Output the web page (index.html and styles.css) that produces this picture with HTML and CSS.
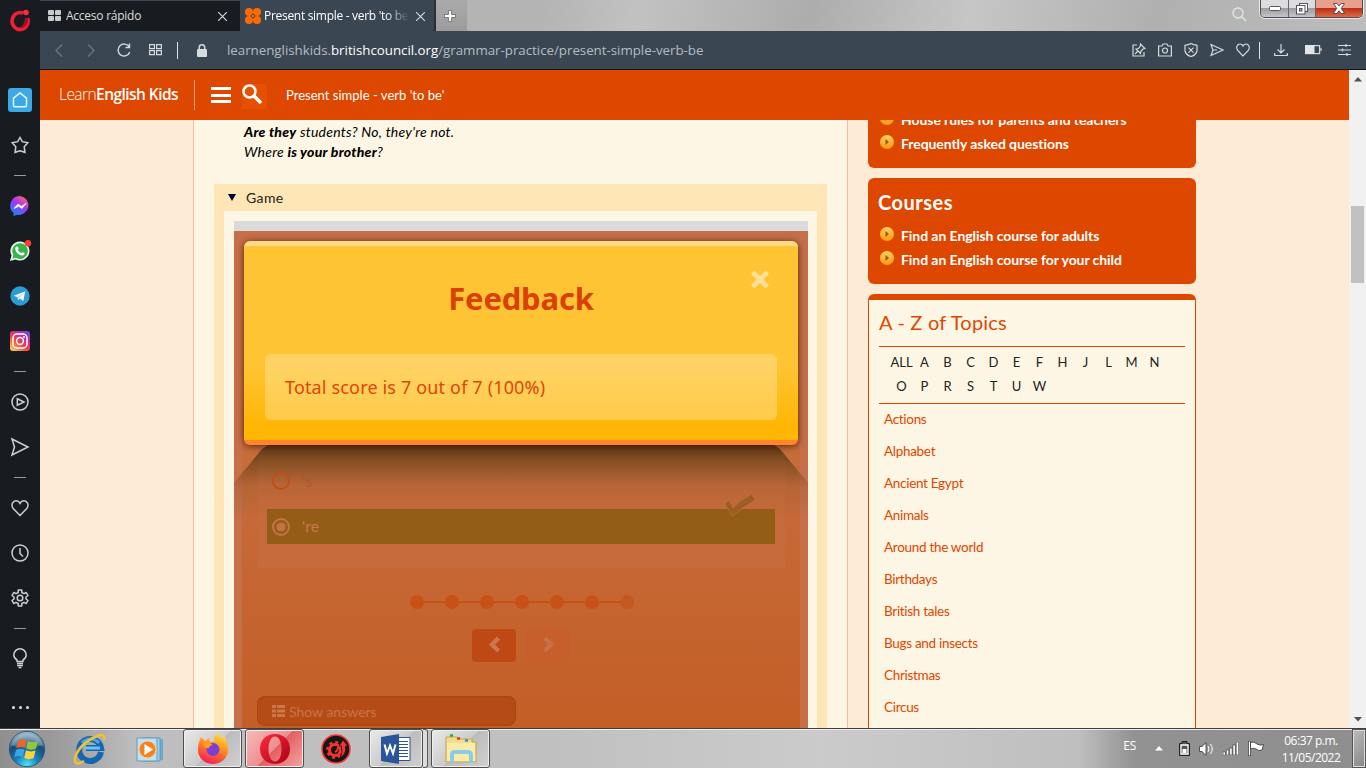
FILE: index.html
```html
<!DOCTYPE html>
<html lang="en">
<head>
<meta charset="utf-8">
<title>Present simple - verb 'to be'</title>
<link rel="stylesheet" href="styles.css">
</head>
<body>
<svg width="0" height="0" class="defs">
  <defs>
    <linearGradient id="ms" x1="0.8" y1="0" x2="0.2" y2="1"><stop offset="0" stop-color="#ff6968"/><stop offset=".45" stop-color="#a334fa"/><stop offset="1" stop-color="#0a8bff"/></linearGradient>
    <linearGradient id="ig" x1="0.1" y1="1" x2="0.9" y2="0"><stop offset="0" stop-color="#ffd15c"/><stop offset=".4" stop-color="#f5483c"/><stop offset=".7" stop-color="#c32aa3"/><stop offset="1" stop-color="#5b4fe0"/></linearGradient>
    <linearGradient id="op" x1="0" y1="0" x2="1" y2="1"><stop offset="0" stop-color="#ff2b3c"/><stop offset="1" stop-color="#a70014"/></linearGradient>
    <radialGradient id="orb" cx=".5" cy=".95" r=".9"><stop offset="0" stop-color="#4fe3ff"/><stop offset=".35" stop-color="#1585bd"/><stop offset=".7" stop-color="#174a72"/><stop offset="1" stop-color="#8fb4cc"/></radialGradient>
    <linearGradient id="ff" x1=".7" y1="0" x2=".3" y2="1"><stop offset="0" stop-color="#ffe03a"/><stop offset=".45" stop-color="#ff8a1e"/><stop offset="1" stop-color="#f5165c"/></linearGradient>
    <linearGradient id="bul" x1="0" y1="0" x2="0" y2="1"><stop offset="0" stop-color="#ffcf63"/><stop offset="1" stop-color="#ff9a10"/></linearGradient>
    <symbol id="bullet" viewBox="0 0 14 14"><circle cx="7" cy="7" r="7" fill="url(#bul)"/><path d="M5.5 4 9 7 5.5 10Z" fill="#a4501a"/></symbol>
  </defs>
</svg>
<div class="screen">
  <div class="browser">
    <nav class="rail">
      <div class="logo"><svg width="22" height="22" viewBox="0 0 22 22"><path d="M14 4.2A8 8.5 0 1 0 18.5 9" fill="none" stroke="#f01f35" stroke-width="3.6"/><path d="M19 9A8 8.5 0 0 1 8 18.5Q15 19 16 9Z" fill="#a3101e"/><circle cx="17" cy="3.5" r="2.8" fill="#ff2940"/></svg></div>
      <div class="it"><span class="home"><svg width="24" height="24" viewBox="0 0 24 24" fill="none" stroke="#e8f6ff" stroke-width="1.5"><path d="M5.5 10.2 12 4.8 18.500 10.2V17.500Q18.500 18.800 17.200 18.800H6.800Q5.500 18.800 5.500 17.500Z" stroke-linejoin="round"/></svg></span></div>
      <div class="it"><svg width="18" height="18" viewBox="0 0 18 18"><path d="M9 1.500 11.300 5.700 16.800 6.800 13.200 10.700 13.900 16.300 9 14.700 4.100 16.300 4.800 10.700 1.200 6.800 6.700 5.700Z"/></svg></div>
      <hr>
      <div class="it"><svg width="20" height="20" viewBox="0 0 20 20" class="solid"><path d="M10 0A10 9.500 0 1 1 7 18.800L3.500 20V16.800A9.600 9.600 0 0 1 10 0Z" fill="url(#ms)"/><path d="M4 12.500 8 8 11.300 10.400 16 7.500 12 12.500 8.800 10.200Z" fill="#fff" stroke="#fff" stroke-width=".8"/></svg></div>
      <div class="it"><svg width="22" height="22" viewBox="0 0 22 22" class="solid"><path d="M11 1.500A9.500 9.500 0 1 1 6.500 19.400L1 21 2.500 15.500A9.500 9.500 0 0 1 11 1.500Z" fill="#eef3ee"/><path d="M11 3.300A7.800 7.800 0 1 1 6.900 17.700L3.500 18.700 4.300 15A7.800 7.800 0 0 1 11 3.300Z" fill="#38b54a"/><path d="M7.500 6.500 9 6.700 9.700 8.800 8.800 10Q10 12.400 12.500 13.300L13.700 12.100 15.700 13.200Q15.500 15.500 13 15.600 6.800 14.500 6.200 8.500Q6.500 7 7.500 6.500Z" fill="#fff"/><circle cx="19" cy="3.200" r="3.200" fill="#ff3b35"/></svg></div>
      <div class="it"><svg width="20" height="20" viewBox="0 0 20 20" class="solid"><circle cx="10" cy="10" r="9.700" fill="#2a9bd3"/><path d="M3.700 9.800 15.300 5.200 13.300 15 9.600 12.600 8 14.200 7.700 11.400Z" fill="#f1f7fb"/><path d="M7.700 11.400 13 7.200 9 12" fill="#a9cde2"/></svg></div>
      <div class="it"><svg width="20" height="20" viewBox="0 0 20 20" class="solid"><rect width="20" height="20" rx="3" fill="url(#ig)"/><g fill="none" stroke="#fff" stroke-width="1.500"><rect x="3" y="3" width="14" height="14" rx="4"/><circle cx="10" cy="10" r="3.400"/></g><circle cx="14" cy="6" r="1" fill="#fff"/></svg></div>
      <hr>
      <div class="it"><svg width="18" height="18" viewBox="0 0 18 18"><circle cx="9" cy="9" r="8"/><path d="M6.300 5.800 13 9 6.300 12.200Z"/></svg></div>
      <div class="it"><svg width="18" height="18" viewBox="0 0 18 18"><path d="M1 1 17 9 1 17 3.500 9Z"/></svg></div>
      <hr>
      <div class="it"><svg width="18" height="18" viewBox="0 0 18 18"><path d="M9 16.500 2.200 9.500C-.5 5.500 2 1.800 5.200 1.800 7.500 1.800 8.500 3.300 9 4.300 9.500 3.300 10.500 1.800 12.800 1.800 16 1.800 18.500 5.500 15.800 9.500Z"/></svg></div>
      <div class="it"><svg width="18" height="18" viewBox="0 0 18 18"><circle cx="9" cy="9" r="8"/><path d="M9 4V9.500L12 12.500"/></svg></div>
      <div class="it"><svg width="18" height="18" viewBox="0 0 18 18"><path d="M7.200 1H10.800V3.500L13 4.700 15.300 3.500 17 6.500 15 8V10L17 11.500 15.300 14.500 13 13.300 10.800 14.500V17H7.200V14.500L5 13.300 2.700 14.500 1 11.500 3 10V8L1 6.500 2.700 3.500 5 4.700 7.200 3.500Z" stroke-linejoin="round"/><circle cx="9" cy="9" r="2.800"/></svg></div>
      <hr>
      <div class="it"><svg width="16" height="21" viewBox="0 0 16 21"><path d="M5 13.500V12Q1.800 10 1.800 7A6.200 6.200 0 0 1 14.200 7Q14.200 10 11 12V13.500ZM5 15.500H11M5 17.500H11M6.500 19.500H9.500"/></svg></div>
      <div class="it more"><i></i><i></i><i></i></div>
    </nav>
    <div class="main">
      <div class="tabs">
        <div class="tab"><svg width="13" height="12" viewBox="0 0 13 12" fill="#c8cbce"><rect width="6" height="5" rx="1"/><rect x="7" width="6" height="5" rx="1"/><rect y="6" width="6" height="5" rx="1"/><rect x="7" y="6" width="6" height="5" rx="1"/></svg><span class="tt">Acceso rápido</span><svg class="x" width="9" height="9" viewBox="0 0 9 9"><path d="M0 0 9 9M9 0 0 9"/></svg></div>
        <div class="tab on"><svg width="16" height="16" viewBox="0 0 16 16"><g fill="#ff6a00"><circle cx="4" cy="4" r="4"/><circle cx="12" cy="4" r="4"/><circle cx="4" cy="12" r="4"/><circle cx="12" cy="12" r="4"/><path d="M4 4H12V12H4Z"/></g><path d="M8 5.300 10.700 8 8 10.700 5.300 8Z" fill="#3a4651"/><circle cx="8" cy="8" r="1.300" fill="#ff6a00"/></svg><span class="tt">Present simple - verb 'to be'</span><svg class="x" width="9" height="9" viewBox="0 0 9 9"><path d="M0 0 9 9M9 0 0 9"/></svg></div>
        <div class="plus"><svg width="12" height="12" viewBox="0 0 12 12"><path d="M4.500.5H7.500V4.500H11.500V7.500H7.500V11.500H4.500V7.500H.5V4.500H4.500Z" fill="#fff" stroke="#666" stroke-width=".8"/></svg></div>
        <svg class="find" width="15" height="15" viewBox="0 0 15 15" fill="none" stroke="#e6e8e8" stroke-width="1.300"><circle cx="6" cy="6" r="5"/><path d="M9.700 9.700 14 14"/></svg>
        <div class="wbs">
          <b class="w1"><svg width="12" height="5"><rect x=".5" y=".5" width="11" height="4" rx="1" fill="#fff" stroke="#565661"/></svg></b>
          <b class="w2"><svg width="12" height="12" viewBox="0 0 12 12" stroke="#565661"><rect x="3.500" y=".5" width="8" height="8" fill="#fff"/><rect x=".5" y="2.500" width="8.500" height="8.500" fill="#fff"/><rect x="3.500" y="5.500" width="2.500" height="2.500" fill="#aaa"/></svg></b>
          <b class="w3"><svg width="12" height="11" viewBox="0 0 12 11"><path d="M.5.500H4L6 3 8 .5H11.500L8.300 5.300 11.500 10.500H8L6 7.800 4 10.500H.5L3.700 5.300Z" fill="#fff" stroke="#54404d" stroke-width=".9"/></svg></b>
        </div>
      </div>
      <div class="bar">
        <svg class="dim" width="8" height="13" viewBox="0 0 8 13"><path d="M7 .5 1 6.500 7 12.500"/></svg>
        <svg class="dim" width="8" height="13" viewBox="0 0 8 13"><path d="M1 .5 7 6.500 1 12.500"/></svg>
        <svg width="14" height="14" viewBox="0 0 14 14"><path d="M12.300 4A6 6 0 1 0 12.800 9M12.500.5V4.500H8.500" stroke-width="1.400"/></svg>
        <svg width="13" height="12" viewBox="0 0 13 12"><path d="M.6.600H5.400V4.600H.6ZM7.600.600H12.400V4.600H7.600ZM.6 6.600H5.400V10.600H.6ZM7.600 6.600H12.400V10.600H7.600Z"/></svg>
        <em></em>
        <svg class="lock" width="10" height="13" viewBox="0 0 10 13"><rect y="5" width="10" height="8" rx="1" fill="#d9dcdf" stroke="none"/><path d="M2.300 6V3.500A2.700 2.700 0 0 1 7.700 3.500V6" stroke-width="1.500"/></svg>
        <span class="url">learnenglishkids.<strong>britishcouncil.org</strong>/grammar-practice/present-simple-verb-be</span>
        <div class="acts">
          <svg width="14" height="14" viewBox="0 0 14 14"><path d="M5 2H1V13H12V9M8.500 1 13 5.500 11 6 9 8 8.500 10.500 4 6 6.500 5.500 8.300 3.300ZM6 8 3 11"/></svg>
          <svg width="14" height="14" viewBox="0 0 14 14"><path d="M.6 3H4L5 1H9L10 3H13.400V13H.6Z"/><circle cx="7" cy="7.500" r="2.500"/></svg>
          <svg width="14" height="14" viewBox="0 0 14 14"><path d="M1 2.300Q4.500 2 7 .6 9.500 2 13 2.300V8Q12 12 7 13.500 2 12 1 8ZM4.500 4.700 9.500 9.700M9.500 4.700 4.500 9.700"/></svg>
          <svg width="14" height="14" viewBox="0 0 14 14"><path d="M1 1.500 13 7 1 12.500 3 7ZM3 7H7"/></svg>
          <svg width="14" height="14" viewBox="0 0 14 14"><path d="M7 13 1.700 7.500C-.5 4 1.500 1 4 1 6 1 6.600 2.200 7 3 7.400 2.200 8 1 10 1 12.500 1 14.500 4 12.300 7.500Z"/></svg>
          <em></em>
          <svg width="14" height="14" viewBox="0 0 14 14"><path d="M7 1V9.500M3.500 6.500 7 10 10.500 6.500M.7 10V12.500H13.300V10"/></svg>
          <svg class="batt" width="17" height="10" viewBox="0 0 17 10"><rect x=".6" y=".6" width="14" height="8"/><rect y="0" width="9.500" height="9" fill="#e2e5e8" stroke="none"/><path d="M16 3V6"/></svg>
          <svg width="13" height="12" viewBox="0 0 13 12"><path d="M0 1.500H13M0 6H13M0 10.500H13M8 0V3M4.500 4.500V7.500M9 9V12"/></svg>
        </div>
      </div>
      <div class="view">
        <div class="site">
          <header>
            <div class="brand">Learn<strong>English Kids</strong></div>
            <div class="burger"><i></i><i></i><i></i></div>
            <div class="mag"><svg width="20" height="20" viewBox="0 0 20 20" fill="none" stroke="#fff"><circle cx="7.500" cy="7.500" r="6" stroke-width="2.500"/><path d="M12 12 19 19" stroke-width="3.500"/></svg></div>
            <div class="crumb">Present simple - verb 'to be'</div>
          </header>
          <div class="cols">
            <article>
              <div class="examples">
                <p><strong>Are they</strong> students? No, they're not.</p>
                <p>Where <strong>is your brother</strong>?</p>
              </div>
              <section class="gamebox">
                <div class="gt"><svg width="8" height="7"><path d="M0 0H8L4 7Z" fill="#00003c"/></svg><span>Game</span></div>
                <div class="inner">
                  <div class="grey"></div>
                  <div class="stage">
                    <div class="sheet"></div>
                    <div class="fold"></div>
                    <div class="card">
                      <svg class="close" width="20" height="19" viewBox="0 0 20 19"><path d="M3.500 3 16.500 16M16.500 3 3.500 16" stroke="#ffe094" stroke-width="5.500" stroke-linecap="square"/></svg>
                      <h2>Feedback</h2>
                      <div class="score">Total score is 7 out of 7 (100%)</div>
                    </div>
                    <div class="quiz">
                      <div class="opt"><svg width="18" height="18"><circle cx="9" cy="9" r="8" fill="none" stroke="#bd5019" stroke-width="2"/></svg><span>'s</span></div>
                      <div class="opt sel"><svg width="18" height="18"><circle cx="9" cy="9" r="8" fill="none" stroke="#c47246" stroke-width="2"/><circle cx="9" cy="9" r="4.600" fill="#c47246"/></svg><span>'re</span>
                        <svg class="tick" width="32" height="26" viewBox="0 0 32 26"><path d="M1 11 5 7 9 15Q16 7 28 1L31 7Q18 15 8.500 23Z" fill="#9c5d26" stroke="#c4703c" stroke-opacity=".7"/></svg></div>
                    </div>
                    <div class="dots"><i></i><i></i><i></i><i></i><i></i><i></i><i></i></div>
                    <div class="btns"><b><svg width="13" height="17" viewBox="0 0 13 17"><path d="M10.500 2 4 8.500 10.500 15" fill="none" stroke="#c77850" stroke-width="4.500"/></svg></b><b class="off"><svg width="13" height="17" viewBox="0 0 13 17"><path d="M2.500 2 9 8.500 2.500 15" fill="none" stroke="#c7704a" stroke-width="4.500"/></svg></b></div>
                    <div class="show"><svg width="13" height="12" fill="#cb764b"><path d="M0 0H4V3H0ZM5 0H13V3H5ZM0 4.500H4V7.500H0ZM5 4.500H13V7.500H5ZM0 9H4V12H0ZM5 9H13V12H5Z"/></svg><span>Show answers</span></div>
                  </div>
                </div>
              </section>
            </article>
            <aside>
              <div class="red top">
                <p><svg><use href="#bullet"/></svg><span>House rules for parents and teachers</span></p>
                <p><svg><use href="#bullet"/></svg><span>Frequently asked questions</span></p>
              </div>
              <div class="red courses">
                <h3>Courses</h3>
                <p><svg><use href="#bullet"/></svg><span>Find an English course for adults</span></p>
                <p><svg><use href="#bullet"/></svg><span>Find an English course for your child</span></p>
              </div>
              <div class="topics">
                <h3>A - Z of Topics</h3>
                <div class="az"><span>ALL</span><span>A</span><span>B</span><span>C</span><span>D</span><span>E</span><span>F</span><span>H</span><span>J</span><span>L</span><span>M</span><span>N</span><span>O</span><span>P</span><span>R</span><span>S</span><span>T</span><span>U</span><span>W</span></div>
                <ul><li>Actions</li><li>Alphabet</li><li>Ancient Egypt</li><li>Animals</li><li>Around the world</li><li>Birthdays</li><li>British tales</li><li>Bugs and insects</li><li>Christmas</li><li>Circus</li></ul>
              </div>
            </aside>
          </div>
        </div>
        <div class="scroll"><svg width="8" height="5"><path d="M0 4.500 4 0 8 4.500Z" fill="#505050"/></svg><div class="thumb"></div><svg width="8" height="5"><path d="M0 0 4 4.500 8 0Z" fill="#505050"/></svg></div>
      </div>
    </div>
  </div>
  <footer class="task">
    <div class="slot start"><svg width="38" height="38" viewBox="0 0 38 38"><circle cx="19" cy="19" r="17.700" fill="url(#orb)" stroke="#355a74"/><path d="M3 15A17 17 0 0 1 35 15Q19 20 3 15Z" fill="#fff" opacity=".25"/><path d="M10 11Q14 8 18.500 10.500L16.800 18Q13 16 8.300 18.300Z" fill="#f0622b"/><path d="M20 11Q25 13.500 30 11L28 18.500Q23.500 21 18.300 18.500Z" fill="#92c83e"/><path d="M8 20Q12.500 17.500 16.500 19.700L14.800 27Q11 25 6.300 27Z" fill="#3da2e6"/><path d="M18 20.300Q23 22.500 27.600 20.300L25.700 28Q21 30.300 16.200 28Z" fill="#ffd23b"/></svg></div>
    <div class="slot"><svg width="34" height="34" viewBox="0 0 34 34"><path d="M28 20A11 11 0 1 1 28 16H13" fill="none" stroke="#1667b3" stroke-width="6"/><path d="M27 16H12" stroke="#69c5f3" stroke-width="3"/><path d="M9 11A11 11 0 0 1 26 11" fill="none" stroke="#43a8e6" stroke-width="3"/><path d="M31 8Q33 1 24 4 6 12 2 26 1 35 11 29" fill="none" stroke="#f5c02d" stroke-width="2.500"/></svg></div>
    <div class="slot"><svg width="30" height="28" viewBox="0 0 30 28"><path d="M10 4H27V25H10Z" fill="#6fa9c9"/><path d="M6 3H24V26H6Z" fill="#9fd0e8" stroke="#5b9dbf"/><path d="M1 3H21V26H1Z" fill="#bfe1f0" stroke="#5b9dbf"/><circle cx="11.500" cy="14.500" r="8.500" fill="#f58220" stroke="#fbd2a5"/><path d="M8.500 9 17 14.500 8.500 20Z" fill="#fff"/></svg></div>
    <div class="app"><svg width="32" height="32" viewBox="0 0 32 32"><path d="M2 9 4 4 8 8 12 5 13 9 18 8 17 4 21 0 24 5 28 4Q31 10 31 17A15 14 0 0 1 1 17Q1 12 2 9Z" fill="url(#ff)"/><ellipse cx="16" cy="16.500" rx="6.500" ry="6.500" fill="#7a3fd4"/><path d="M6 11Q10 8 16 12 12 13 12 15 8 16 6 11Z" fill="#ff9b26"/></svg></div>
    <div class="app opera"><svg width="32" height="32" viewBox="0 0 32 32"><path fill-rule="evenodd" d="M16 1C25 1 31 7.500 31 16S25 31 16 31 1 24.500 1 16 7 1 16 1ZM16 3.500C12 3.500 9.500 9 9.500 16S12 28.500 16 28.500 22.500 23 22.500 16 20 3.500 16 3.500Z" fill="url(#op)"/></svg></div>
    <div class="slot disc"><svg width="30" height="30" viewBox="0 0 30 30"><circle cx="15" cy="15" r="14" fill="#171717" stroke="#f33" stroke-width="1.500"/><circle cx="14" cy="16" r="5.500" fill="none" stroke="#f4352f" stroke-width="3"/><circle cx="14" cy="16" r="7.700" fill="none" stroke="#f4352f" stroke-width="2.500" stroke-dasharray="3 3.050"/><path d="M14 18Q17 17 17 13" stroke="#f4352f" stroke-width="2" fill="none"/><path d="M22 6 27 12H24.500Q26 20 19 24 22 19 20.500 12H18Z" fill="#f4352f" stroke="#171717" stroke-width=".8"/></svg></div>
    <div class="app word"><svg width="30" height="30" viewBox="0 0 30 30"><path d="M15 3.500H29V26.500H15Z" fill="#fff" stroke="#2a5699"/><path d="M18 7.500H27M18 10.500H27M18 13.500H27M18 16.500H27M18 19.500H27M18 22.500H27" stroke="#2a5699"/><path d="M0 3 18 0V30L0 27Z" fill="#2a5699"/><path d="M3.500 10.500 6 19.500 9 11.500 12 19.500 14.500 10.500" fill="none" stroke="#fff" stroke-width="2"/></svg></div><div class="stack"></div>
    <div class="app expl"><svg width="34" height="30" viewBox="0 0 34 30"><path d="M2 3H13L15 5H28V8H32V28H2Z" fill="#f1dd8b" stroke="#c5a64a"/><path d="M6 1.500H9" stroke="#1fae3a" stroke-width="2.500"/><path d="M13 4.500H16" stroke="#d33b25" stroke-width="2.500"/><path d="M21 6.500H24" stroke="#368bd0" stroke-width="2.500"/><path d="M3 9H31V27H3Z" fill="#f9ecab"/><path d="M8 29V21Q8 18 11 18H24Q27 18 27 21V29" fill="none" stroke="#8bcbe5" stroke-width="4"/></svg></div>
    <div class="tray">
      <span class="es">ES</span>
      <svg class="tri" width="8" height="5"><path d="M0 4.500 4 0 8 4.500Z" fill="#fff"/></svg>
      <svg width="11" height="15" viewBox="0 0 11 15"><path d="M3 .5H8V2.500H10.500V14.500H.5V2.500H3Z" fill="#555" stroke="#222"/><path d="M2 4H9V13H2Z" fill="none" stroke="#fff" stroke-width="1.300"/><path d="M3.500 8H7.500V12H3.500Z" fill="#fff"/></svg>
      <svg width="15" height="14" viewBox="0 0 15 14"><path d="M.5 4.500H3L7 .7V13.300L3 9.500H.5Z" fill="#fff" stroke="#333" stroke-width=".8"/><path d="M9 4Q11 7 9 10M11.500 2Q15 7 11.500 12" fill="none" stroke="#fff"/></svg>
      <svg width="16" height="13" viewBox="0 0 16 13" fill="#fff" stroke="#333" stroke-width=".6"><path d="M0 10H2.500V13H0ZM3.300 8H5.800V13H3.300ZM6.600 6H9.100V13H6.600ZM9.900 3H12.400V13H9.900ZM13.200 0H15.700V13H13.200Z"/></svg>
      <svg width="16" height="15" viewBox="0 0 16 15"><path d="M1.500 0V15" stroke="#333" stroke-width="3"/><path d="M1.500.5V14.500" stroke="#fff" stroke-width="1.500"/><path d="M2.500 1.500Q6 0 9 3 12 5 15.500 3.500L14 9Q11 10.500 8 8 5 6.500 2.500 8Z" fill="#fff" stroke="#333" stroke-width=".8"/></svg>
      <div class="clock"><div>06:37 p.m.</div><div>11/05/2022</div></div>
      <div class="desk"></div>
    </div>
  </footer>
</div>
</body>
</html>
```
FILE: styles.css
```css
* { box-sizing: border-box; margin: 0; padding: 0; }
body { width: 1366px; height: 768px; overflow: hidden; font-family: "Open Sans", sans-serif; }
.defs { position: absolute; }
.screen { width: 1366px; height: 768px; display: flex; flex-direction: column; }
.browser { height: 728px; display: flex; }

.rail { width: 40px; flex: none; background: #181c20; }
.rail svg { fill: none; stroke: #c9d0d4; stroke-width: 1.5; overflow: visible; }
.rail svg.solid { stroke: none; }
.logo { height: 77px; padding: 9px 0 0 9px; }
.rail .logo svg { stroke: none; }
.it { height: 45px; display: flex; align-items: center; justify-content: center; }
.home { width: 24px; height: 24px; background: #3ba9e4; border-radius: 3px; display: flex; }
.rail .home svg { stroke: #e8f6ff; }
.rail hr { border: 0; height: 1px; width: 12px; margin: 8px 14px 7px; background: #8b9da6; }
.more { height: 53px; gap: 4px; }
.more i { width: 3px; height: 3px; border-radius: 50%; background: #e2e5e7; }

.main { flex: 1; display: flex; flex-direction: column; min-width: 0; }
.tabs { height: 31px; display: flex; background: linear-gradient(100deg, #b4b4b4 0 38%, #c2c2c2 45%, #adadad 58%, #c6c6c6 70%, #b0b0b0 84%, #bdbdbd 100%); }
.tab { width: 200px; background: #181c20; border-top: 1px solid #3b4754; padding: 0 13px 0 8px; display: flex; align-items: center; font-size: 12px; color: #d8dcdf; }
.tab .tt { flex: 1; margin-left: 5px; white-space: nowrap; overflow: hidden; letter-spacing: -.25px; line-height: 18px; }
.tab .x { margin-left: 7px; fill: none; stroke: #d8dcdf; stroke-width: 1.1; }
.tab.on { width: 194px; background: #3a4651; padding: 0 9px 0 5px; color: #fff; }
.tab.on .tt { margin-left: 3px; letter-spacing: -.3px; -webkit-mask-image: linear-gradient(90deg, #000 84%, transparent); mask-image: linear-gradient(90deg, #000 84%, transparent); }
.plus { width: 33px; padding-right: 3px; border-left: 2px solid #2b3035; background: linear-gradient(#aaa, #9c9c9c); display: flex; align-items: center; justify-content: center; }
.find { margin: 7px 13px 0 auto; }
.wbs { width: 103px; height: 18px; margin-right: 3px; display: flex; border: 1px solid #4d4d52; border-top: 0; border-radius: 0 0 5px 5px; overflow: hidden; box-shadow: 0 0 0 1px #e7e7e7; }
.wbs b { display: flex; align-items: center; justify-content: center; background: linear-gradient(#dcdcdc 45%, #9d9d9f 50%, #c5c5c7); border-right: 1px solid #65656a; }
.w1 { width: 28px; }
.w2 { width: 27px; }
.wbs .w3 { flex: 1; border: 0; background: linear-gradient(#e6a08d 45%, #bd2f12 50%, #dc6a48); }

.bar { height: 39px; background: #3a4651; border-bottom: 1px solid #12161a; display: flex; align-items: center; padding: 0 15px 0 15px; }
.bar svg { fill: none; stroke: #d5dadd; stroke-width: 1.2; flex: none; }
.bar .dim { stroke: #6d7983; margin-right: 24px; }
.bar .dim + .dim { margin-right: 22px; }
.bar > svg:nth-child(3) { margin-right: 18px; }
.bar > svg:nth-child(4) { margin-right: 15px; }
.bar em { width: 1px; height: 17px; background: #dfe3e5; }
.bar .lock { margin: 0 20px 0 19px; }
.url { font-size: 13.330px; color: #b5bdc4; white-space: nowrap; letter-spacing: -.025px; }
.url strong { font-weight: 400; color: #fff; }
.acts { margin-left: auto; display: flex; align-items: center; gap: 12px; }
.acts em { margin: 0 2px 0 -3px; }
.acts .batt { margin: 0 4px 0 5px; }

.view { height: 658px; display: flex; }
.site { width: 1309px; background: #feebd5; display: flex; flex-direction: column; font-family: Lato, sans-serif; }
.site header { height: 50px; flex: none; background: #de4700; color: #fff; display: flex; align-items: center; padding-left: 19px; }
.brand { width: 136px; height: 30px; line-height: 29px; border-right: 1px solid #f0a27c; font-family: "Open Sans", sans-serif; font-weight: 300; font-size: 15.500px; letter-spacing: -.55px; white-space: nowrap; }
.brand strong { font-weight: 600; }
.burger { width: 20px; margin-left: 16px; display: flex; flex-direction: column; gap: 3.500px; }
.burger i { height: 3px; background: #fff; }
.mag { width: 25px; height: 25px; margin: 3px 0 0 11px; background: #e55003; display: flex; }
.crumb { margin-left: 19px; font-size: 13px; letter-spacing: .02px; }
.cols { flex: 1; min-height: 0; overflow: hidden; display: flex; padding-left: 153px; }

article { width: 655px; flex: none; background: #fef6e4; border: 1px solid #efc0a0; border-width: 0 1px; padding: 2px 20px 0; display: flex; flex-direction: column; }
.examples { padding-left: 30px; height: 62px; flex: none; font-size: 14px; line-height: 20px; font-style: italic; letter-spacing: .25px; color: #000; }
.examples strong { font-weight: 900; }
.gamebox { background: #fde5b6; padding: 0 10px; flex: 1; min-height: 0; }
.gt { height: 27px; padding: 0 0 1px 4px; display: flex; align-items: center; gap: 10px; font-size: 14px; letter-spacing: .4px; color: #222; }
.inner { background: #fef6e4; padding: 10px 9px 0 10px; height: 517px; }
.grey { height: 10px; background: #dadada; }
.stage { height: 497px; padding: 10px 10px 0; position: relative; background: #c6704a; display: flex; flex-direction: column; overflow: hidden; isolation: isolate; }
.sheet { position: absolute; z-index: -2; left: 8px; right: 8px; top: 10px; bottom: 0; background: linear-gradient(#c87043, #c66b39 50%, #c45e27); }
.fold { position: absolute; z-index: -1; left: 0; right: 0; top: 214px; height: 75px; background: linear-gradient(rgba(80,48,14,.9), rgba(90,60,20,.58) 25%, rgba(140,80,40,.26) 55%, rgba(197,106,60,0)); clip-path: polygon(0 38px, 28px 4px, 34px 0, 540px 0, 546px 4px, 574px 38px, 574px 75px, 0 75px); }
.card { position: relative; height: 204px; flex: none; border-radius: 6px; border-top: 5px solid #ffd984; border-bottom: 5px solid #ff842c; background: linear-gradient(#ffc434 0 62%, #ffb605 92%); box-shadow: 0 1px 7px rgba(50,20,0,.8); padding: 33px 21px 0; }
.close { position: absolute; right: 28px; top: 24px; transform: scale(.88); }
.card h2 { text-align: center; font: 700 31px/38px "Noto Sans", sans-serif; letter-spacing: -.2px; color: #da3f04; }
.score { height: 66px; margin-top: 37px; padding-left: 20px; line-height: 67px; border-radius: 6px; background: rgba(255,232,170,.4); font-family: "Noto Sans", sans-serif; font-size: 18px; letter-spacing: .16px; color: #dc4708; white-space: nowrap; }
.quiz { margin: 0 13px; height: 123px; flex: none; padding: 18px 10px 0; background: linear-gradient(rgba(198,112,70,0), rgba(198,112,70,.5)); font-size: 16px; color: #b05429; }
.opt { position: relative; height: 36px; display: flex; align-items: center; padding-left: 5px; gap: 12px; }
.opt span { padding-bottom: 2px; }
.sel { margin-top: 10px; height: 35px; background: #935c17; color: #c8784c; }
.tick { position: absolute; right: 19px; top: -16px; }
.dots { width: 224px; height: 14px; flex: none; margin: 27px 0 0 166px; display: flex; justify-content: space-between; background: linear-gradient(#c85118, #c85118) center / 210px 2px no-repeat; }
.dots i { width: 14px; height: 14px; border-radius: 50%; background: #c85118; }
.dots i:last-child { background: #c35921; }
.btns { display: flex; gap: 10px; justify-content: center; margin-top: 20px; flex: none; }
.btns b { width: 44px; height: 33px; border-radius: 4px; background: #be4915; display: flex; justify-content: center; padding-top: 7px; }
.btns .off { background: #c65f2b; }
.show { width: 259px; height: 30px; flex: none; margin: 34px 0 0 13px; border-radius: 8px; background: #b54c17; display: flex; align-items: center; padding-left: 15px; gap: 4px; font-size: 14px; color: #c9734a; box-shadow: inset 0 0 3px #9d4012; }

aside { width: 328px; margin-left: 20px; }
.red { background: #de4700; border-radius: 6px; color: #fff; font-weight: 700; font-size: 14px; padding-left: 12px; letter-spacing: -.07px; }
.red p { height: 24px; display: flex; gap: 7px; white-space: nowrap; line-height: 24px; }
.red p svg { width: 14px; height: 14px; flex: none; margin-top: 3px; }
.red.top { height: 60px; margin-top: -12px; }
.courses { height: 106px; margin: 10px 0; padding-top: 10px; }
.courses h3 { margin-left: -2px; font-size: 20px; line-height: 28px; height: 36px; letter-spacing: .5px; }
.topics { height: 600px; background: #fef6e4; border: 1px solid #de4700; border-top-width: 6px; border-radius: 6px; padding: 9px 10px; color: #de4700; }
.topics h3 { font-weight: 400; font-size: 20px; line-height: 26px; height: 37px; letter-spacing: .2px; }
.az { border: 1px solid #de4700; border-width: 1px 0; height: 58px; padding: 3px 0 0 11px; display: grid; grid-template-columns: repeat(12, 23px); grid-auto-rows: 24px; text-align: center; line-height: 24px; font-size: 13px; color: #222; }
.topics ul { list-style: none; margin-top: -1px; padding-left: 5px; font-size: 13.500px; letter-spacing: -.3px; line-height: 32px; }

.scroll { width: 17px; background: #f1f1f1; display: flex; flex-direction: column; align-items: center; padding: 7px 0 6px; }
.thumb { width: 13px; height: 77px; margin: 124px 0 auto; background: #c1c1c1; }

.task { height: 40px; border-top: 1px solid #3f3f3f; box-shadow: inset 0 1px 0 #eee; display: flex; align-items: stretch; background: linear-gradient(90deg, #8f8f8f 0, #9a9a9a 4%, #bebebe 10%, #c0c0c0 40%, #cbcbcb 60%, #bfbfbf 79%, #929292 83%, #8e8e8e 100%); }
.slot { width: 61px; display: flex; align-items: center; justify-content: center; }
.start { width: 54px; margin-right: 5px; }
.app { width: 59px; border: 1px solid #4e4e4e; border-radius: 3px; box-shadow: inset 0 0 0 1px #eee; background: linear-gradient(135deg, #e9e9e9, #cbcbcb 50%, #bcbcbc 51%, #d0d0d0); display: flex; align-items: center; justify-content: center; margin-left: 3px; }
.slot + .app { margin-left: 2px; }
.app.opera { background: linear-gradient(135deg, #f5bcbc, #ee8e8e 50%, #e45f5f 51%, #f5a3a3); }
.disc { width: 62px; margin-left: 1px; }
.app.word { width: 54px; margin-left: 2px; }
.stack { width: 5px; border: 1px solid #5b5b5b; border-left: 0; border-radius: 0 3px 3px 0; background: #ddd; }
.expl { margin-left: 3px; }
.tray { margin-left: auto; display: flex; align-items: center; color: #fff; font-size: 12px; }
.tray > svg { margin-right: 9px; }
.es { margin-right: 19px; font-size: 12px; letter-spacing: -.3px; padding-bottom: 6px; }
.tray .tri { margin-right: 16px; }
.clock { width: 78px; margin: 0 0 0 -1px; text-align: center; line-height: 17px; letter-spacing: -.5px; }
.desk { width: 14px; height: 100%; margin-left: 2px; border: 1px solid #555; box-shadow: inset 0 0 0 1px #ddd; background: linear-gradient(135deg, #bbb, #888); }
```
